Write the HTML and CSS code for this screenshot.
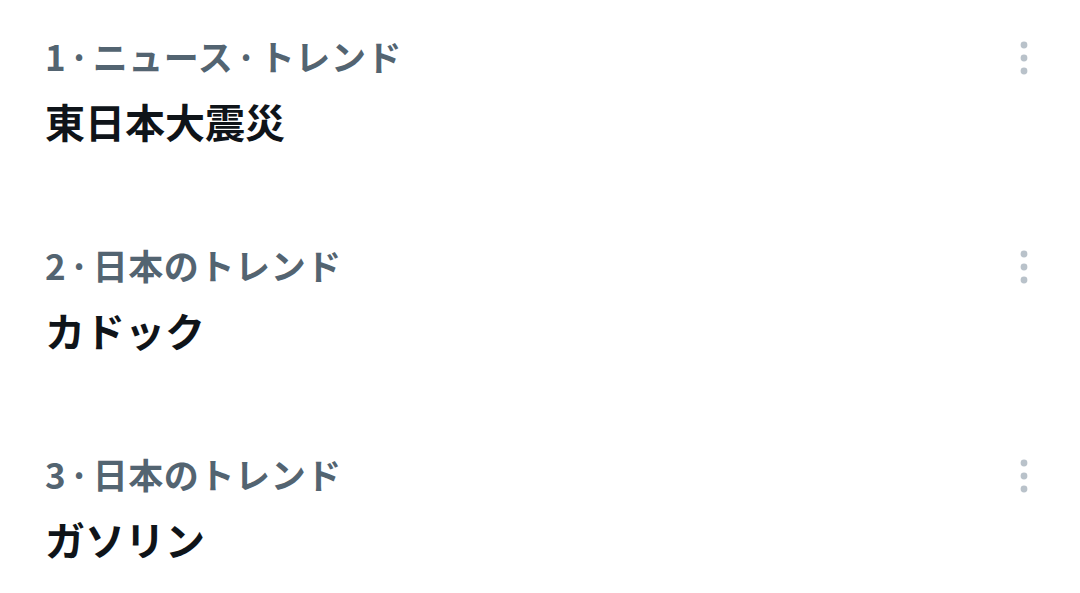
FILE: index.html
```html
<!DOCTYPE html>
<html lang="ja">
<head>
<meta charset="utf-8">
<link rel="stylesheet" href="styles.css">
</head>
<body>
<div class="list">
  <div class="trend">
    <div class="text">
      <div class="meta">1 · ニュース · トレンド</div>
      <div class="name">東日本大震災</div>
    </div>
    <svg class="more" viewBox="0 0 12 40" width="12" height="40"><circle cx="6" cy="6" r="3.4"/><circle cx="6" cy="19" r="3.4"/><circle cx="6" cy="32" r="3.4"/></svg>
  </div>
  <div class="trend">
    <div class="text">
      <div class="meta">2 · 日本のトレンド</div>
      <div class="name">カドック</div>
    </div>
    <svg class="more" viewBox="0 0 12 40" width="12" height="40"><circle cx="6" cy="6" r="3.4"/><circle cx="6" cy="19" r="3.4"/><circle cx="6" cy="32" r="3.4"/></svg>
  </div>
  <div class="trend">
    <div class="text">
      <div class="meta">3 · 日本のトレンド</div>
      <div class="name">ガソリン</div>
    </div>
    <svg class="more" viewBox="0 0 12 40" width="12" height="40"><circle cx="6" cy="6" r="3.4"/><circle cx="6" cy="19" r="3.4"/><circle cx="6" cy="32" r="3.4"/></svg>
  </div>
</div>
</body>
</html>
```
FILE: styles.css
```css
html, body {
  margin: 0;
  padding: 0;
  background: #ffffff;
}
body {
  font-family: "Noto Sans CJK JP", "Noto Sans", sans-serif;
}
.list {
  display: flex;
  flex-direction: column;
}
.trend {
  display: flex;
  justify-content: space-between;
  align-items: flex-start;
  height: 209px;
  box-sizing: border-box;
  padding: 35px 50px 0 45px;
}
.trend:last-child {
  height: auto;
  padding-bottom: 20px;
}
.meta {
  font-size: 35px;
  line-height: 42px;
  font-weight: 700;
  color: #536471;
  word-spacing: -6px;
  letter-spacing: 0.6px;
}
.name {
  font-size: 40px;
  line-height: 48px;
  font-weight: 700;
  color: #0f1419;
  margin-top: 20px;
}
.more {
  fill: #b9c2ca;
  margin-top: 4px;
}
```
